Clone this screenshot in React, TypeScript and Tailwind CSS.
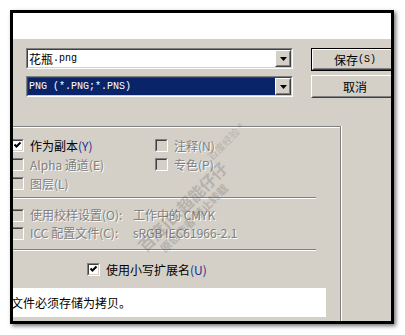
import type { ReactNode } from 'react';

const CJK = "font-['Noto_Sans_CJK_SC',sans-serif]";
const MONO = "font-['Liberation_Mono','Noto_Sans_CJK_SC',monospace] text-[10px]";

function Sunken({ children, className = '' }: { children: ReactNode; className?: string }) {
  return (
    <div className={`border border-t-[#808080] border-l-[#808080] border-b-white border-r-white ${className}`}>
      <div className="h-full border border-t-[#404040] border-l-[#404040] border-b-[#d4d0c8] border-r-[#d4d0c8]">
        {children}
      </div>
    </div>
  );
}

function Raised({ children, className = '' }: { children: ReactNode; className?: string }) {
  return (
    <div className={`border border-t-white border-l-white border-b-[#404040] border-r-[#404040] bg-[#d4d0c8] ${className}`}>
      <div className="h-full border border-t-[#d4d0c8] border-l-[#d4d0c8] border-b-[#808080] border-r-[#808080] flex items-center justify-center">
        {children}
      </div>
    </div>
  );
}

function Combo({ children, selected }: { children: ReactNode; selected?: boolean }) {
  return (
    <Sunken className="h-[21px] w-[267px]">
      <div className="flex h-full bg-white">
        <div
          className={`flex-1 flex items-center pl-px ${selected ? 'bg-[#0a246a] text-white' : 'text-black'}`}
        >
          {children}
        </div>
        <Raised className="w-[16px] h-full">
          <svg width="7" height="4" viewBox="0 0 7 4">
            <path d="M0 0h7L3.5 4z" fill="#000" />
          </svg>
        </Raised>
      </div>
    </Sunken>
  );
}

function Check({ checked, disabled }: { checked?: boolean; disabled?: boolean }) {
  return (
    <Sunken className="w-[13px] h-[13px] shrink-0">
      <div className={`w-full h-full ${disabled ? 'bg-[#d4d0c8]' : 'bg-white'}`}>
        {checked && (
          <svg width="9" height="9" viewBox="0 0 9 9">
            <path d="M1.5 3.5l2 2 4-4" stroke="#000" strokeWidth="2" fill="none" />
          </svg>
        )}
      </div>
    </Sunken>
  );
}

const dis = 'text-[#808080] [text-shadow:1px_1px_0_#fff]';

function Opt({ label, mn, checked, disabled }: { label: string; mn: string; checked?: boolean; disabled?: boolean }) {
  return (
    <div className="flex items-center gap-[6px]">
      <Check checked={checked} disabled={disabled} />
      <span className={`${CJK} text-[12px] leading-[14px] whitespace-nowrap ${disabled ? dis : 'text-black'}`}>
        {label}
        <span className={disabled ? '' : 'text-[#1c2c8c]'}>({mn})</span>
      </span>
    </div>
  );
}

function Etch({ className = '' }: { className?: string }) {
  return <div className={`h-[2px] border-t border-t-[#808080] border-b border-b-white ${className}`} />;
}

export default function App() {
  return (
    <div className="w-[405px] h-[335px] bg-white pt-[10px] pl-[10px]">
      <div className="relative w-[384px] h-[314px] border-[3px] border-black bg-[#d4d0c8] overflow-hidden shadow-[2px_2px_4px_rgba(0,0,0,0.55)]">
        <div className="h-[26px] bg-white" />

        <div className="flex pt-[9px] pl-[13px] gap-[18px]">
          <div className="flex flex-col gap-[7px] shrink-0">
            <Combo>
              <span className={`${CJK} text-[12px] leading-[14px]`}>花瓶</span>
              <span className={MONO}>.png</span>
            </Combo>
            <Combo selected>
              <span className={`${MONO} leading-[14px]`}>PNG (*.PNG;*.PNS)</span>
            </Combo>
          </div>
          <div className="flex flex-col gap-[4px] shrink-0">
            <div className="border border-black">
              <Raised className="w-[86px] h-[21px]">
                <span className={`${CJK} text-[12px] leading-[14px] text-black`}>保存</span>
                <span className={`${MONO} text-black`}>(S)</span>
              </Raised>
            </div>
            <Raised className="w-[88px] h-[23px]">
              <span className={`${CJK} text-[12px] leading-[14px] text-black`}>取消</span>
            </Raised>
          </div>
        </div>

        <div className="mt-[28px] ml-[-20px] w-[348px] h-[220px] border-t border-r border-[#808080] shadow-[inset_0_1px_0_#fff,1px_0_0_#fff] pl-[18px] pt-[9px]">
          <div className="grid grid-cols-[144px_auto] auto-rows-[19px] items-center">
            <Opt label="作为副本" mn="Y" checked />
            <Opt label="注释" mn="N" disabled />
            <Opt label="Alpha 通道" mn="E" disabled />
            <Opt label="专色" mn="P" disabled />
            <Opt label="图层" mn="L" disabled />
          </div>

          <Etch className="w-[305px] mt-[4px]" />

          <div className="grid grid-cols-[122px_auto] auto-rows-[18px] items-center mt-[7px]">
            <div className="flex items-center gap-[6px]">
              <Check disabled />
              <span className={`${CJK} text-[12px] leading-[14px] whitespace-nowrap ${dis}`}>使用校样设置(O):</span>
            </div>
            <span className={`${CJK} text-[12px] leading-[14px] whitespace-nowrap ${dis}`}>工作中的 CMYK</span>
            <div className="flex items-center gap-[6px]">
              <Check disabled />
              <span className={`${CJK} text-[12px] leading-[14px] whitespace-nowrap ${dis}`}>ICC 配置文件(C):</span>
            </div>
            <span className={`${CJK} text-[12px] leading-[14px] whitespace-nowrap ${dis}`}>sRGB IEC61966-2.1</span>
          </div>

          <Etch className="w-[305px] mt-[7px]" />

          <div className="h-[19px] flex items-center mt-[9px] ml-[76px]">
            <Opt label="使用小写扩展名" mn="U" checked />
          </div>

          <div className="mt-[9px] w-[315px] h-[29px] bg-white flex items-center">
            <span className={`${CJK} text-[12px] leading-[14px] text-black whitespace-nowrap`}>文件必须存储为拷贝。</span>
          </div>
        </div>

        {/* watermark over the dialog */}
        <div className="absolute left-[70px] top-[172px] w-[200px] -rotate-[45deg] opacity-25 pointer-events-none flex flex-col items-center text-[#5a5a5a]">
          <span className={`${CJK} text-[10px] leading-[12px] self-end`}>百度经验 ®</span>
          <span className={`${CJK} text-[16px] leading-[19px] font-bold`}>百度ID:超能仔仔</span>
          <span className={`${CJK} text-[11px] leading-[13px] font-bold`}>原创作者 禁止转载</span>
        </div>
      </div>
    </div>
  );
}
